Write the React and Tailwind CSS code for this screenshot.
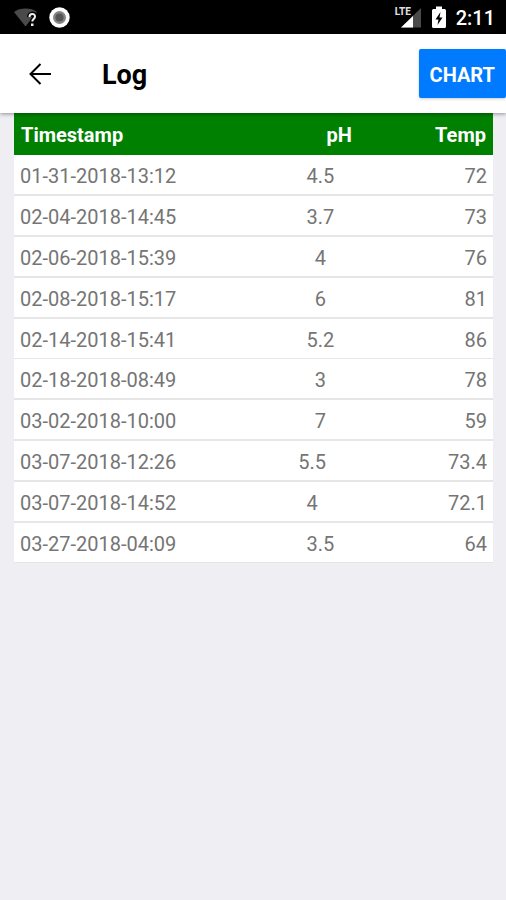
const readings = [
  { timestamp: '01-31-2018-13:12', ph: '4.5', temp: '72' },
  { timestamp: '02-04-2018-14:45', ph: '3.7', temp: '73' },
  { timestamp: '02-06-2018-15:39', ph: '4', temp: '76' },
  { timestamp: '02-08-2018-15:17', ph: '6', temp: '81' },
  { timestamp: '02-14-2018-15:41', ph: '5.2', temp: '86' },
  { timestamp: '02-18-2018-08:49', ph: '3', temp: '78' },
  { timestamp: '03-02-2018-10:00', ph: '7', temp: '59' },
  { timestamp: '03-07-2018-12:26', ph: '5.5', temp: '73.4' },
  { timestamp: '03-07-2018-14:52', ph: '4', temp: '72.1' },
  { timestamp: '03-27-2018-04:09', ph: '3.5', temp: '64' },
];

const WifiIcon = () => (
  <svg width="26" height="22" viewBox="0 0 26 22" aria-hidden="true">
    <path d="M0 6C3 3.500 7 2.500 11.500 2.500S20 3.500 23 6L11.500 20.500z" fill="#4a4a4a" />
    <path
      d="M15.500 11c0-4 5.500-4 5.500-.5 0 2.500-2.700 2.500-2.700 5"
      fill="none"
      stroke="#000"
      strokeWidth="5"
    />
    <path
      d="M15.500 11c0-4 5.500-4 5.500-.5 0 2.500-2.700 2.500-2.700 5"
      fill="none"
      stroke="#eee"
      strokeWidth="2"
    />
    <rect x="17" y="17.500" width="2.500" height="2.500" fill="#eee" />
  </svg>
);

const RecordIcon = () => (
  <svg width="22" height="22" viewBox="0 0 22 22" aria-hidden="true">
    <circle cx="11.500" cy="11.500" r="10.200" fill="#fff" />
    <circle cx="11.500" cy="11.500" r="6.500" fill="#858585" />
    <circle cx="11.500" cy="11.500" r="4" fill="#555" />
  </svg>
);

const SignalIcon = () => (
  <div className="relative h-[22px] w-[27px]">
    <svg width="27" height="22" viewBox="0 0 27 22" aria-hidden="true">
      <path d="M26 2v19.500H6z" fill="#4a4a4a" />
      <path d="M18 10V21.500H6z" fill="#fff" />
    </svg>
    <span className="absolute top-0 left-0 bg-black text-[10px] leading-[12px] font-extrabold text-[#ddd]">LTE</span>
  </div>
);

const BatteryIcon = () => (
  <svg width="14" height="22" viewBox="0 0 14 22" aria-hidden="true">
    <path d="M4 0.500h6V3h2.500q1.500 0 1.500 1.500v16q0 1.500-1.500 1.500h-11Q0 22 0 20.500v-16Q0 3 1.500 3H4z" fill="#fff" />
    <path d="M8.500 6L3.500 13.500H6.500L5.500 19L10.500 11.500H7.500z" fill="#000" />
  </svg>
);

const BackIcon = () => (
  <svg width="24" height="24" viewBox="0 0 24 24" fill="none" stroke="#000" strokeWidth="2" aria-hidden="true">
    <path d="M23 12H2.500M12.500 2L2.500 12l10 10" />
  </svg>
);

const StatusBar = () => (
  <div className="flex h-[34px] items-center justify-between bg-black pr-[11px] pl-3.5 text-white">
    <div className="flex items-center gap-2">
      <WifiIcon />
      <RecordIcon />
    </div>
    <div className="flex items-center gap-2.5">
      <SignalIcon />
      <BatteryIcon />
      <span className="pt-0.5 text-xl font-medium">2:11</span>
    </div>
  </div>
);

const Header = () => (
  <header className="relative flex h-[79px] items-center bg-white pl-7 shadow-[0_1px_4px_rgba(0,0,0,0.4)]">
    <button type="button" aria-label="Back">
      <BackIcon />
    </button>
    <h1 className="ml-[50px] pt-1 text-[27px] font-bold text-black">Log</h1>
    <button
      type="button"
      className="ml-auto h-[49px] rounded-xs bg-[#007aff] px-[11px] pt-0.5 text-xl font-bold text-white shadow-[0_1px_3px_rgba(0,0,0,0.2)]"
    >
      CHART
    </button>
  </header>
);

const App = () => {
  return (
    <div className="min-h-screen bg-[#eeeef3] font-[Roboto,sans-serif]">
      <StatusBar />
      <Header />

      {/* Readings, each row spreads its own cells */}
      <main className="pr-[13px] pl-3.5">
        <table className="block w-full text-xl">
          <thead className="block">
            <tr className="flex h-[42px] items-center justify-between bg-[#008000] px-[7px] pt-0.5 text-white">
              <th className="font-bold">Timestamp</th>
              <th className="pl-[120px] font-bold">pH</th>
              <th className="font-bold">Temp</th>
            </tr>
          </thead>
          <tbody className="block text-[#757575]">
            {readings.map((r) => (
              <tr
                key={r.timestamp}
                className="flex items-center justify-between border-b-2 border-[#e6e6e6] bg-white px-1.5 pt-[7px] pb-[3px] leading-[29px] nth-[5n]:border-b"
              >
                <td>{r.timestamp}</td>
                <td>{r.ph}</td>
                <td>{r.temp}</td>
              </tr>
            ))}
          </tbody>
        </table>
      </main>
    </div>
  );
};

export default App;
